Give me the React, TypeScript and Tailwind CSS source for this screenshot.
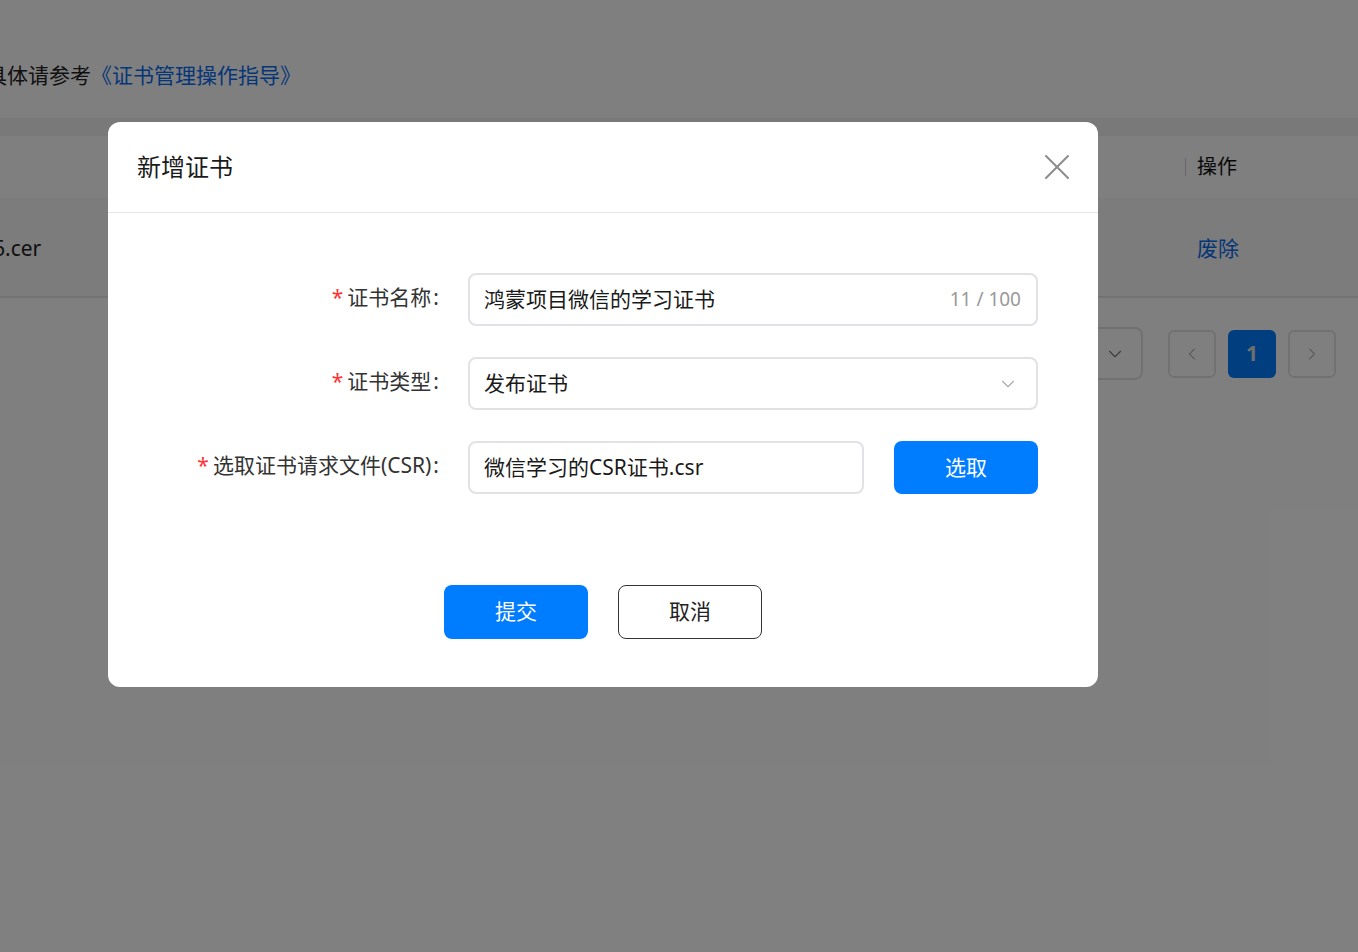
import { X, ChevronDown, ChevronLeft, ChevronRight } from 'lucide-react'

const font = { fontFamily: '"Noto Sans", "Noto Sans CJK SC", sans-serif' }

function Field({ label, children }: { label: string; children: React.ReactNode }) {
  return (
    <div className="flex items-center">
      <div className="w-[331px] shrink-0 text-right text-[21px] text-[#333] -mt-[3px]">
        <span className="text-[#ff3333] mr-[4px]">*</span>
        {label}
        <span className="ml-[2px]">:</span>
      </div>
      <div className="ml-[29px]">{children}</div>
    </div>
  )
}

export default function App() {
  return (
    <div className="relative min-h-[952px] w-[1358px] overflow-hidden bg-white" style={font}>
      {/* page behind the dialog */}
      <div className="h-[118px] pt-[57px]">
        <p className="-ml-[14px] text-[21px] leading-[36px] text-[#222] whitespace-nowrap">
          具体请参考<span className="text-[#0a6cf0]">《证书管理操作指导》</span>
        </p>
      </div>
      <div className="h-[18px] bg-[#f3f3f3]" />
      <div className="flex h-[62px] items-center bg-[#fefefe]">
        <div className="flex-1" />
        <div className="h-[18px] w-px bg-[#d0d0d0]" />
        <div className="w-[172px] pl-[11px] text-[20px] text-[#111]">操作</div>
      </div>
      <div className="flex h-[100px] items-center border-b-2 border-[#e6e6e6] bg-[#f8f8f8] pt-[4px]">
        <div className="-ml-[7px] flex-1 text-[21px] text-[#222]">6.cer</div>
        <div className="w-[161px] text-[21px] text-[#0a6cf0]">废除</div>
      </div>
      <div className="mt-[29px] flex items-center justify-end pr-[22px]">
        <div className="flex h-[53px] w-[120px] items-center justify-end rounded-[8px] border-2 border-[#e3e3e3] pr-[15px]">
          <ChevronDown className="h-[22px] w-[22px] text-[#777]" strokeWidth={1.2} />
        </div>
        <div className="ml-[25px] flex h-[48px] w-[48px] items-center justify-center rounded-[6px] border-2 border-[#e3e3e3]">
          <ChevronLeft className="h-[20px] w-[20px] text-[#888]" strokeWidth={1.2} />
        </div>
        <div className="ml-[12px] flex h-[48px] w-[48px] items-center justify-center rounded-[6px] bg-[#007dff] text-[21px] font-bold text-[#ddd]">
          1
        </div>
        <div className="ml-[12px] flex h-[48px] w-[48px] items-center justify-center rounded-[6px] border-2 border-[#e3e3e3]">
          <ChevronRight className="h-[20px] w-[20px] text-[#888]" strokeWidth={1.2} />
        </div>
      </div>

      {/* overlay */}
      <div className="absolute inset-0 bg-black/50" />

      {/* dialog */}
      <div className="absolute left-[108px] top-[122px] w-[990px] rounded-[12px] bg-white">
        <div className="flex h-[91px] items-center justify-between border-b border-[#e6e6e6] pl-[29px] pr-[19px]">
          <h2 className="text-[24px] text-[#1a1a1a]">新增证书</h2>
          <X className="h-[44px] w-[44px] text-[#8c8c8c]" strokeWidth={1.1} />
        </div>

        <div className="flex flex-col gap-[31px] pt-[60px]">
          <Field label="证书名称">
            <div className="flex h-[53px] w-[570px] items-center justify-between rounded-[8px] border-2 border-[#e2e2e6] pl-[14px] pr-[15px]">
              <span className="text-[21px] text-[#1a1a1a]">鸿蒙项目微信的学习证书</span>
              <span className="text-[19px] text-[#999]">11 / 100</span>
            </div>
          </Field>
          <Field label="证书类型">
            <div className="flex h-[53px] w-[570px] items-center justify-between rounded-[8px] border-2 border-[#e2e2e6] pl-[14px] pr-[17px]">
              <span className="text-[21px] text-[#1a1a1a]">发布证书</span>
              <ChevronDown className="h-[22px] w-[22px] text-[#aaa]" strokeWidth={1.2} />
            </div>
          </Field>
          <Field label="选取证书请求文件(CSR)">
            <div className="flex items-center gap-[30px]">
              <div className="flex h-[53px] w-[396px] items-center rounded-[8px] border-2 border-[#e2e2e6] pl-[14px]">
                <span className="text-[21px] text-[#1a1a1a]">微信学习的CSR证书.csr</span>
              </div>
              <button className="h-[53px] w-[144px] rounded-[8px] bg-[#007dff] text-[21px] text-white">选取</button>
            </div>
          </Field>
        </div>

        <div className="flex justify-center gap-[30px] pb-[48px] pt-[91px]">
          <button className="h-[54px] w-[144px] rounded-[8px] bg-[#007dff] text-[21px] text-white">提交</button>
          <button className="h-[54px] w-[144px] rounded-[8px] border border-[#333] text-[21px] text-[#222]">取消</button>
        </div>
      </div>
    </div>
  )
}
